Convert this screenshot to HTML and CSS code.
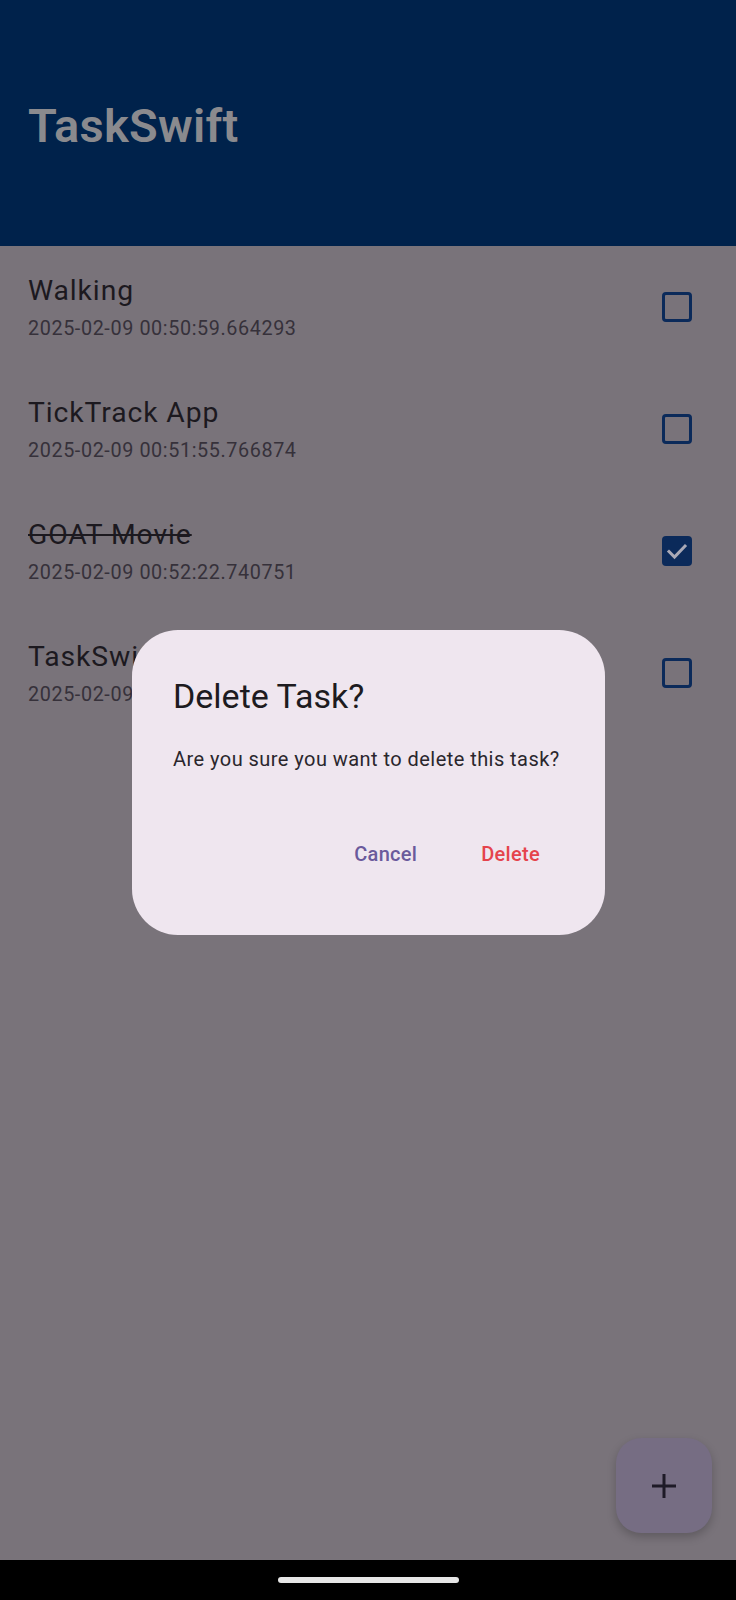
FILE: index.html
```html
<!DOCTYPE html>
<html lang="en">
<head>
<meta charset="utf-8">
<title>TaskSwift</title>
<link rel="stylesheet" href="styles.css">
</head>
<body>
<div class="screen">
  <header class="appbar">
    <h1 class="appbar-title">TaskSwift</h1>
  </header>
  <main class="list">
    <div class="row">
      <div class="row-text">
        <div class="row-title">Walking</div>
        <div class="row-date">2025-02-09 00:50:59.664293</div>
      </div>
      <span class="checkbox"></span>
    </div>
    <div class="row">
      <div class="row-text">
        <div class="row-title">TickTrack App</div>
        <div class="row-date">2025-02-09 00:51:55.766874</div>
      </div>
      <span class="checkbox"></span>
    </div>
    <div class="row">
      <div class="row-text">
        <div class="row-title done">GOAT Movie</div>
        <div class="row-date">2025-02-09 00:52:22.740751</div>
      </div>
      <span class="checkbox checked">
        <svg viewBox="0 0 30 30" width="30" height="30"><path d="M7 15.5 L12.5 21 L23 10" fill="none" stroke="#a9a9b6" stroke-width="3" stroke-linecap="square"/></svg>
      </span>
    </div>
    <div class="row">
      <div class="row-text">
        <div class="row-title">TaskSwift App</div>
        <div class="row-date">2025-02-09 00:53:10.118432</div>
      </div>
      <span class="checkbox"></span>
    </div>
  </main>
  <footer class="navbar"><span class="handle"></span></footer>

  <div class="dialog" role="dialog">
    <h2 class="dialog-title">Delete Task?</h2>
    <p class="dialog-content">Are you sure you want to delete this task?</p>
    <div class="dialog-actions">
      <button class="btn btn-cancel">Cancel</button>
      <button class="btn btn-delete">Delete</button>
    </div>
  </div>

  <button class="fab" aria-label="Add task">
    <svg viewBox="0 0 24 24" width="24" height="24"><path d="M12 0 V24 M0 12 H24" stroke="#1e1a27" stroke-width="3" fill="none"/></svg>
  </button>
</div>
</body>
</html>
```
FILE: styles.css
```css
* { box-sizing: border-box; }
html, body {
  margin: 0;
  padding: 0;
  background: #79737a;
  font-family: Roboto, "Noto Sans", sans-serif;
}
.screen {
  position: relative;
  width: 736px;
  height: 1600px;
  display: flex;
  flex-direction: column;
  overflow: hidden;
}
.appbar {
  height: 246px;
  flex: none;
  background: #00224b;
  padding: 98px 0 0 28px;
}
.appbar-title {
  margin: 0;
  font-size: 47px;
  line-height: 55px;
  font-weight: 600;
  color: #8a8a8e;
  letter-spacing: 0.3px;
}
.list {
  flex: 1;
  display: flex;
  flex-direction: column;
}
.row {
  height: 122px;
  display: flex;
  align-items: center;
  justify-content: space-between;
  padding: 0 44px 0 28px;
}
.row-text {
  display: flex;
  flex-direction: column;
}
.row-title {
  font-size: 28.3px;
  line-height: 38px;
  letter-spacing: 0.9px;
  color: #1c191f;
}
.row-title.done {
  text-decoration: line-through;
  text-decoration-thickness: 2px;
}
.row-date {
  margin-top: 6px;
  font-size: 19.8px;
  line-height: 26px;
  letter-spacing: 0.6px;
  color: #36313a;
}
.checkbox {
  width: 30px;
  height: 30px;
  border: 3.5px solid #0b2a5a;
  border-radius: 4px;
  flex: none;
  display: flex;
  align-items: center;
  justify-content: center;
}
.checkbox.checked {
  background: #0b2a5a;
  border: none;
}
.navbar {
  height: 40px;
  flex: none;
  background: #000;
  display: flex;
  justify-content: center;
  padding-top: 17px;
}
.handle {
  width: 181px;
  height: 6px;
  border-radius: 3px;
  background: #e6e6e6;
}
.dialog {
  position: absolute;
  left: 132px;
  top: 630px;
  width: 473px;
  background: #efe6ef;
  border-radius: 46px;
  padding: 46px 40px 61px 41px;
}
.dialog-title {
  margin: 0;
  font-size: 34px;
  line-height: 40px;
  font-weight: 400;
  color: #1d1b20;
}
.dialog-content {
  margin: 29px 0 0;
  font-size: 20px;
  line-height: 28px;
  letter-spacing: 0.45px;
  white-space: nowrap;
  color: #2a262d;
}
.dialog-actions {
  margin-top: 61px;
  margin-right: 4px;
  display: flex;
  justify-content: flex-end;
  gap: 22px;
}
.btn {
  height: 40px;
  padding: 0 21px;
  border: none;
  background: transparent;
  font-family: Roboto, sans-serif;
  font-size: 20px;
  font-weight: 500;
  letter-spacing: 0.3px;
  line-height: 40px;
}
.btn-cancel { color: #6a5a9c; }
.btn-delete { color: #e5434c; }
.fab {
  position: absolute;
  left: 616px;
  top: 1438px;
  width: 96px;
  height: 95px;
  border: none;
  border-radius: 25px;
  background: #766d83;
  box-shadow: 0 4px 10px rgba(0,0,0,0.22);
  display: flex;
  align-items: center;
  justify-content: center;
  padding: 0;
}
```
